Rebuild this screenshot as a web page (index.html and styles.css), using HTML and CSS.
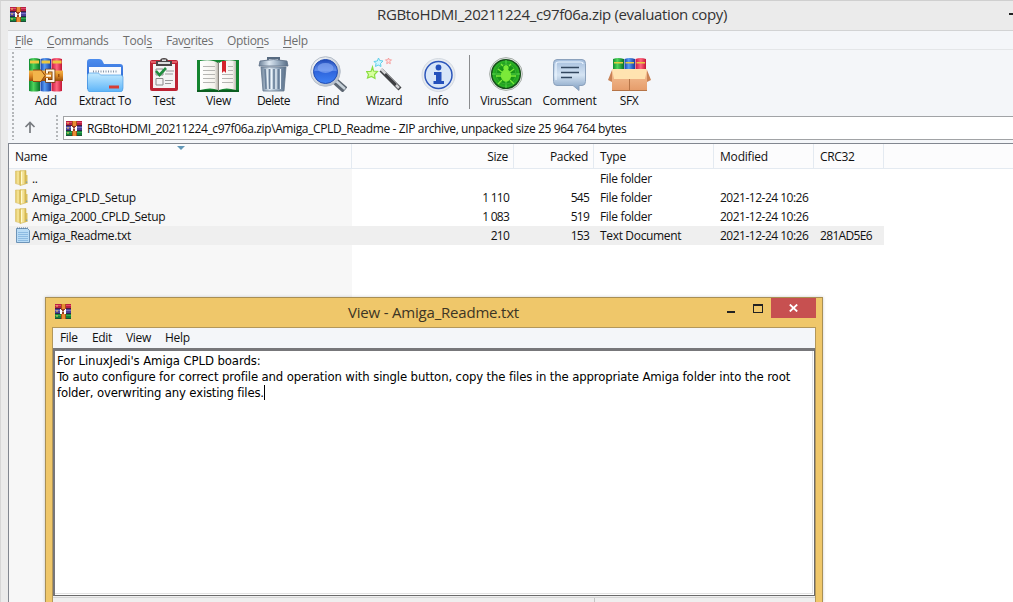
FILE: index.html
```html
<!DOCTYPE html>
<html lang="en">
<head>
<meta charset="utf-8">
<title>RGBtoHDMI_20211224_c97f06a.zip (evaluation copy)</title>
<link rel="stylesheet" href="styles.css">
</head>
<body>
<svg class="defs" width="0" height="0">
  <defs>
    <linearGradient id="g-green"><stop offset="0" stop-color="#118c30"/><stop offset=".4" stop-color="#4fd45c"/><stop offset="1" stop-color="#087027"/></linearGradient>
    <linearGradient id="g-blue"><stop offset="0" stop-color="#1846b0"/><stop offset=".4" stop-color="#579bf3"/><stop offset="1" stop-color="#153c9c"/></linearGradient>
    <linearGradient id="g-red"><stop offset="0" stop-color="#cb1841"/><stop offset=".5" stop-color="#ff6780"/><stop offset="1" stop-color="#c31535"/></linearGradient>
    <linearGradient id="g-belt" x2="0" y2="1"><stop offset="0" stop-color="#f5b64a"/><stop offset=".5" stop-color="#dc8923"/><stop offset="1" stop-color="#994d0c"/></linearGradient>
    <linearGradient id="g-folder" x2="0" y2="1"><stop offset="0" stop-color="#c4eaff"/><stop offset="1" stop-color="#5cb4f8"/></linearGradient>
    <linearGradient id="g-back" x2="0" y2="1"><stop offset="0" stop-color="#4d8dee"/><stop offset="1" stop-color="#2159c8"/></linearGradient>
    <linearGradient id="g-metal"><stop offset="0" stop-color="#6d8299"/><stop offset=".35" stop-color="#dde8f2"/><stop offset=".65" stop-color="#9eb1c5"/><stop offset="1" stop-color="#566c84"/></linearGradient>
    <linearGradient id="g-page"><stop offset="0" stop-color="#fff"/><stop offset=".8" stop-color="#f4f2ec"/><stop offset="1" stop-color="#bcb8b0"/></linearGradient>
    <linearGradient id="g-lens" x2="0" y2="1"><stop offset="0" stop-color="#1d48b8"/><stop offset=".45" stop-color="#6290ee"/><stop offset=".5" stop-color="#2f65dc"/><stop offset="1" stop-color="#3f82f5"/></linearGradient>
    <linearGradient id="g-ring" x2="1" y2="1"><stop offset="0" stop-color="#fafcff"/><stop offset="1" stop-color="#a9b3c0"/></linearGradient>
    <linearGradient id="g-talk" x2="0" y2="1"><stop offset="0" stop-color="#a3bddc"/><stop offset=".5" stop-color="#d5e4f3"/><stop offset="1" stop-color="#7e9dc1"/></linearGradient>
    <linearGradient id="g-box" x2="0" y2="1"><stop offset="0" stop-color="#f5c297"/><stop offset="1" stop-color="#e59b69"/></linearGradient>
    <radialGradient id="g-virus"><stop offset="0" stop-color="#0b7d0e"/><stop offset=".65" stop-color="#1a9b19"/><stop offset="1" stop-color="#32bb2b"/></radialGradient>
    <linearGradient id="g-dir"><stop offset="0" stop-color="#ddc15a"/><stop offset=".5" stop-color="#f9e99f"/><stop offset="1" stop-color="#d2b144"/></linearGradient>
    <symbol id="archive" viewBox="0 0 16 15">
      <path fill="#b91f43" d="M0 0h16v5H0z"/><path fill="#4a4298" d="M0 5h16v5H0z"/><path fill="#148239" d="M0 10h16v5H0z"/>
      <path fill="#e1486a" d="M0 1h16v1H0z"/><path fill="#7d70c5" d="M0 6h16v1H0z"/><path fill="#35a954" d="M0 11h16v1H0z"/>
      <path fill="#251c39" d="M0 4.3h16V5H0zM0 9.3h16v.7H0zM0 14.4h16v.6H0z"/>
      <path fill="#a84f18" d="M6 0h5v15H6z"/><path fill="#e98c35" d="M7 0h3v15H7z"/>
      <path fill="#963d25" d="M5 5h6v5H5z"/><path fill="#fff" d="M5 5h1v4h1v1H5zM10 5h1v5H9V9h1zM6 6h1v1h2V6h1v3H9V7.500H7V9H6z"/>
      <path fill="#f0d45b" d="M1.500 1h1v2h-1zM1.500 6h1v2h-1zM1.500 11h1v2h-1z"/>
    </symbol>
    <symbol id="dir" viewBox="0 0 13 16">
      <path fill="url(#g-dir)" stroke="#d8c06a" stroke-width=".6" d="M.5 1h5.200v14L.5 13.600z"/><path fill="url(#g-dir)" stroke="#ceb352" stroke-width=".6" d="M5 .8 11 .5v13.300L5 15.600z"/>
      <path fill="#d9bf5c" d="M11 5h1.500v9H11z"/><path fill="#fffbd0" d="M6 1.500h1.100v12.700L6 14.600z"/><path fill="#6196c6" d="M11.300 11.500h.9v1.500h-.9z"/>
    </symbol>
  </defs>
</svg>

<div class="window">
  <header class="titlebar">
    <svg class="app-icon"><use href="#archive"/></svg>
    <h1 class="title">RGBtoHDMI_20211224_c97f06a.zip (evaluation copy)</h1>
    <span class="minimize"></span>
  </header>

  <main class="client">
    <nav class="menu">
      <span class="m-file"><u>F</u>ile</span><span class="m-commands"><u>C</u>ommands</span><span class="m-tools">Tool<u>s</u></span><span class="m-fav">Fav<u>o</u>rites</span><span class="m-options">Optio<u>n</u>s</span><span class="m-help"><u>H</u>elp</span>
    </nav>

    <div class="toolbar">
      <div class="tool w-add">
        <svg width="34" height="34" viewBox="0 0 34 34"><path fill="url(#g-green)" d="M0 1q5-2 11 0v32q-6 1-11 0z"/><path fill="url(#g-blue)" d="M11.500 1q5-2 10.500 0v32q-5 1-10.500 0z"/><path fill="url(#g-red)" d="M22.500 1q5-2 10.500 0v32q-5 1-10.500 0z"/><path fill="#edc740" d="M1 2.500h9v3H1zM12.500 2.500H21v3h-8.500zM23.500 2.500h9v3h-9z"/><path fill="url(#g-belt)" d="M0 12.500h34V23H0z"/><path fill="#f2b54b" d="M4 12h8l4 5.500-4 6H4z"/><path fill="none" stroke="#8d4611" d="M4 12h8l4 5.500-4 6H4"/><path fill="none" stroke="#7a3c0b" stroke-width="3.600" d="M18 15.500v-3h6.500v10.500H18v-3"/><path fill="none" stroke="#fff5e3" stroke-width="2" d="M18 15.500v-3h6.500v10.500H18v-3M17 17.700h5"/><path fill="#9d5310" d="M29 16h1.500v3H29z"/></svg>
        <span>Add</span>
      </div>
      <div class="tool w-extract">
        <svg width="37" height="34" viewBox="0 0 37 34"><path fill="url(#g-back)" d="M0 4q0-3 3-3h9q3 0 4 3l1 2h16q3 0 3 3v22H0z"/><path fill="#f9fbfe" d="M2 9h32v14H2z"/><path stroke="#8795a8" stroke-width="2" stroke-dasharray="1 1.500" d="M6 13.500h25"/><path fill="url(#g-folder)" stroke="#4e9de5" stroke-width=".7" d="M.5 18q0-3 2-3h9l2 2h20q2.500 0 2.500 2v11q0 4-3 4H3.500q-3 0-3-4z"/><path fill="#d63d35" d="M22 27.500h10v3H22z"/></svg>
        <span>Extract To</span>
      </div>
      <div class="tool w-test">
        <svg width="28" height="34" viewBox="0 0 28 34"><rect y="2" width="28" height="31" rx="2" fill="#bd2434"/><rect x="1" y="3" width="26" height="2" fill="#e35a65"/><path fill="#f4f4f4" d="M3 6h22v24H3z"/><path fill="#4b4546" d="M6 3h4q0-3 4-3t4 3h4v5H6z"/><path fill="#ddd" d="M8 4h12v2H8zM12 1.500h4V3h-4z"/><path fill="none" stroke="#8a8a8a" d="M6 11h7v6H6zM6 20.500h7v6.500H6z"/><path stroke="#999" d="M16 13h8M15 16h8M15 22.500h8M15 25.500h6"/><path fill="none" stroke="#218d3e" stroke-width="2.600" d="m6 13 3.500 4 6.500-7"/></svg>
        <span>Test</span>
      </div>
      <div class="tool w-view">
        <svg width="43" height="33" viewBox="0 0 43 33"><path fill="#148530" d="M0 1h42v32H0z"/><path fill="#0b5e20" d="M0 31h42v2H0z"/><path fill="url(#g-page)" d="M3 2q12-2 18 2v27q-7-3-18 0z"/><path fill="url(#g-page)" d="M39 2q-11-2-17 2v27q7-3 17 0z"/><path stroke="#b5b5b2" d="M6 7.500h12M6 11.500h12M6 15.500h12M6 19.500h12M6 23.500h12M25 15.500h11M25 19.500h11M25 23.500h11M31 7.500h5M31 11.500h5"/><path stroke="#85827b" d="M21.500 3v29"/><path fill="#d5232b" d="M25 2h4v12l-2-2-2 2z"/></svg>
        <span>View</span>
      </div>
      <div class="tool w-delete">
        <svg width="31" height="35" viewBox="0 0 31 35"><path fill="none" stroke="#576a80" stroke-width="2" d="M10 4V1h11v3"/><path fill="url(#g-metal)" stroke="#5e7086" stroke-width=".8" d="M2 4q14-3 27 0l1 5H1z"/><path fill="url(#g-metal)" stroke="#62768d" stroke-width=".8" d="M3 10h25l-2 24H5z"/><path stroke="#6a809a" stroke-width="1.600" d="m7 12 1 20M11.500 12v20M16 12v20M20.500 12v20M25 12l-1 20"/><path stroke="#edf5fb" d="m9 12 1 20M13.500 12v20M18 12v20M22.500 12v20"/></svg>
        <span>Delete</span>
      </div>
      <div class="tool w-find">
        <svg width="37" height="36" viewBox="0 0 37 36"><path stroke="#5c6672" stroke-width="7" d="m25 25 10 9"/><path stroke="#c8d2da" stroke-width="2.500" d="m25 24 10 9"/><circle cx="15.500" cy="15.500" r="14.800" fill="url(#g-ring)" stroke="#b3bcc8"/><circle cx="15.500" cy="15.500" r="12" fill="url(#g-lens)" stroke="#214cb2"/><ellipse cx="15.500" cy="12" rx="8" ry="5" fill="#83a7f2" opacity=".7"/></svg>
        <span>Find</span>
      </div>
      <div class="tool w-wizard">
        <svg width="36" height="35" viewBox="0 0 36 35"><path stroke="#3f4043" stroke-width="4.200" d="m15 13 19 19"/><path stroke="#d4d4d6" stroke-width="2.500" d="m15 12 4.500 4.500M30 28l3 3"/><path stroke="#85868a" d="m20 16 12 12"/><path fill="#d8ff9e" stroke="#8ade42" stroke-width="1.200" d="m6.500 10 1 4 4 .5-3 3 .5 4-3.500-2-4 1.500L2.500 17.500l-2-3H5z"/><path fill="#d1f6ff" stroke="#5fcfe9" d="m12.500 1 1.200 2.500 3.300.5-2.500 2.500.5 3-2.800-1.500L9.500 9.500 10 6.500 8 4.500l3.300-.5z"/><path fill="#ffe3e1" stroke="#f58f8f" stroke-width=".8" d="m22.500 1 .8 1.800h2.200l-1.600 1.700.4 2.200-1.800-1-1.800 1 .4-2.200-1.600-1.700h2.200z"/></svg>
        <span>Wizard</span>
      </div>
      <div class="tool w-info">
        <svg width="35" height="34" viewBox="0 0 35 34"><circle cx="17.500" cy="17" r="16.500" fill="#e7ebf0" stroke="#d3d9e1"/><circle cx="17.500" cy="17" r="13.500" fill="#d8e6f8" stroke="#2c56bb" stroke-width="1.500"/><circle cx="17.500" cy="9.500" r="2.900" fill="#2451bc"/><path fill="#2451bc" d="M13 14h7.500v9H23v3H12.500v-3h2.500v-6H13z"/></svg>
        <span>Info</span>
      </div>
      <div class="separator"></div>
      <div class="tool w-virus">
        <svg width="34" height="34" viewBox="0 0 34 34"><circle cx="17" cy="17" r="16.400" fill="#e6e8e7" stroke="#a6ada8"/><circle cx="17" cy="17" r="14.300" fill="url(#g-virus)" stroke="#15501a" stroke-width="1.500"/><path stroke="#59d94b" d="M17 3v28M3 17h28"/><circle cx="17" cy="17" r="10" fill="none" stroke="#39aa33"/><g fill="#7bea39" stroke="#7bea39" stroke-width="1.300"><ellipse cx="17" cy="18.500" rx="4.500" ry="5.500"/><circle cx="17" cy="11" r="2"/><path fill="none" d="m14 9-2-2m8 2 2-2m-9 8-4-3m12 3 4-3m-13 7H7m15 0h5m-14 4-4 4m12-4 4 4"/></g></svg>
        <span>VirusScan</span>
      </div>
      <div class="tool w-comment">
        <svg width="33" height="34" viewBox="0 0 33 34"><path fill="url(#g-talk)" stroke="#8ca2bd" d="M4 1.500h25q3.500 0 3.500 4v18q0 4-3.500 4h-3v5l-6-5H4q-3.500 0-3.500-4v-18q0-4 3.500-4z"/><path fill="none" stroke="#ecf5ff" stroke-width="1.200" d="M3 22V6q0-2 3-2h21q3 0 3 2"/><path stroke="#33475f" stroke-width="1.500" d="M8 9.500h18M8 14.500h18M8 19.500h11"/></svg>
        <span>Comment</span>
      </div>
      <div class="tool w-sfx">
        <svg width="43" height="34" viewBox="0 0 43 34"><path fill="url(#g-green)" d="M5 1q5-2 11 0v12H5z"/><path fill="url(#g-blue)" d="M16.500 1q5-2 10.500 0v12H16.500z"/><path fill="url(#g-red)" d="M27.500 1q5-2 10.500 0v12H27.500z"/><path fill="#e8cb41" d="M6 4h9v1.500H6zM17.500 4H26v1.500h-8.500zM28.500 4H37v1.500h-8.500z"/><path fill="url(#g-box)" d="M4 12h35v21H4z"/><path fill="#c98355" d="m4 12-4 10 4 2zM39 12l4 10-4 2z"/><path fill="#ffe3b0" d="M4 11h35l-2 10H6z"/><path stroke="#b57447" d="M21.500 21v12M4 32.500h35"/></svg>
        <span>SFX</span>
      </div>
    </div>

    <div class="address-row">
      <svg class="up" width="12" height="13" viewBox="0 0 12 13"><path fill="none" stroke="#777b80" stroke-width="1.700" d="M6 12V2M1.500 6 6 1.500 10.500 6"/></svg>
      <div class="grip"></div>
      <div class="address"><svg class="app-icon"><use href="#archive"/></svg><span>RGBtoHDMI_20211224_c97f06a.zip\Amiga_CPLD_Readme - ZIP archive, unpacked size 25 964 764 bytes</span></div>
    </div>

    <section class="list">
      <div class="row head"><span class="name">Name</span><span class="num">Size</span><span class="num">Packed</span><span class="type">Type</span><span class="mod">Modified</span><span class="crc">CRC32</span><i class="sort"></i></div>
      <div class="row"><span class="name"><svg class="dir"><use href="#dir"/></svg>..</span><span></span><span></span><span>File folder</span><span></span><span></span></div>
      <div class="row"><span class="name loose"><svg class="dir"><use href="#dir"/></svg>Amiga_CPLD_Setup</span><span class="num">1 110</span><span class="num">545</span><span>File folder</span><span class="date">2021-12-24 10:26</span><span></span></div>
      <div class="row"><span class="name"><svg class="dir"><use href="#dir"/></svg>Amiga_2000_CPLD_Setup</span><span class="num">1 083</span><span class="num">519</span><span>File folder</span><span class="date">2021-12-24 10:26</span><span></span></div>
      <div class="row selected"><span class="name"><svg class="doc" width="14" height="16" viewBox="0 0 14 16"><path fill="#b9dcf6" stroke="#6d94b8" d="M.5 1.500h11l2 2v12H.5z"/><path stroke="#8dbbe2" d="M2 5.500h10M2 7.500h10M2 9.500h10M2 11.500h10M2 13.500h10"/><path stroke="#5d7b97" stroke-dasharray="1 1" d="M1 1h11"/></svg>Amiga_Readme.txt</span><span class="num">210</span><span class="num">153</span><span>Text Document</span><span class="date">2021-12-24 10:26</span><span class="hash">281AD5E6</span></div>
    </section>
  </main>
</div>

<section class="viewer">
  <header class="viewer-bar">
    <svg class="app-icon"><use href="#archive"/></svg>
    <h2 class="viewer-title">View - Amiga_Readme.txt</h2>
    <span class="v-min"></span><span class="v-max"></span>
    <span class="v-close"><svg width="9" height="8" viewBox="0 0 9 8"><path stroke="#fff" stroke-width="1.800" d="m.8.500 7.400 7M8.200.500.800 7.500"/></svg></span>
  </header>
  <div class="viewer-body">
    <nav class="viewer-menu"><span>File</span><span>Edit</span><span>View</span><span>Help</span></nav>
    <div class="text">
      <p class="l1">For LinuxJedi's Amiga CPLD boards:</p>
      <p class="l2">To auto configure for correct profile and operation with single button, copy the files in the appropriate Amiga folder into the root</p>
      <p class="l3">folder, overwriting any existing files.<i class="caret"></i></p>
    </div>
    <footer class="status"><span></span></footer>
  </div>
</section>
</body>
</html>
```
FILE: styles.css
```css
* { box-sizing: border-box; }
html, body { margin: 0; height: 100%; overflow: hidden; }
body { font: 12px/19px "Open Sans", "Noto Sans", sans-serif; letter-spacing: -.33px; color: #111; white-space: nowrap; position: relative; }
svg { display: block; flex: none; }
h1, h2, p { margin: 0; font-weight: 400; }
.defs { position: absolute; }
.app-icon { width: 16px; height: 15px; }

.window { height: 602px; background: #ebebeb; border-top: 1px solid #cfcfcf; border-left: 1px solid #d6d6d6; padding-left: 7px; }
.titlebar { height: 29px; display: flex; align-items: flex-start; padding-left: 2px; }
.titlebar .app-icon { margin-top: 6px; }
.title { margin-left: 351px; font-size: 15px; line-height: 27px; letter-spacing: -.35px; color: #333; flex: 1; }
.minimize { width: 4px; height: 2px; background: #222; margin-top: 12px; }
.client { border-top: 1px solid #d2d3d4; height: 572px; background: #f4f6f9; }
.menu { height: 19px; display: flex; color: #6d6d6d; padding-left: 7px; border-bottom: 1px solid #e4e6e8; }
.menu span { flex: none; }
.menu u { text-underline-offset: 2px; text-decoration-thickness: 1px; }
.m-file { width: 32px; }
.m-commands { width: 76px; }
.m-tools { width: 43px; letter-spacing: -.16px; }
.m-fav { width: 61px; letter-spacing: -.42px; }
.m-options { width: 56px; }

.toolbar { height: 65px; display: flex; padding: 5px 0 0 12px; background: repeating-linear-gradient(#b4b7ba 0 2px, #f4f6f9 2px 4px) 4px 2px / 2px 63px no-repeat; }
.tool { flex: none; display: flex; flex-direction: column; align-items: center; justify-content: space-between; height: 54px; }
.tool svg { margin-top: 3px; }
.tool span { line-height: 17px; height: 17px; }
.w-add { width: 52px; }
.w-add span { letter-spacing: -.1px; }
.w-extract { width: 66px; }
.w-test { width: 52px; }
.w-view { width: 57px; margin-right: -1px; }
.w-view svg { margin-top: 4px; }
.w-delete { width: 55px; letter-spacing: -.5px; }
.w-delete svg { margin-top: 2px; }
.w-find { width: 54px; }
.w-find svg { margin-top: 1px; }
.w-wizard { width: 58px; letter-spacing: -.42px; }
.w-wizard svg { margin-top: 2px; }
.w-info { width: 50px; }
.w-virus { width: 66px; margin-left: 3px; }
.w-virus svg { margin-top: 2px; }
.w-comment { width: 61px; letter-spacing: -.2px; }
.w-sfx { width: 58px; }
.separator { width: 1px; height: 54px; background: #8a8c8f; margin: 0 0 0 6px; }

.address-row { height: 28px; display: flex; align-items: flex-start; padding-left: 16px; background: repeating-linear-gradient(#b4b7ba 0 2px, #f4f6f9 2px 4px) 4px 0 / 2px 25px no-repeat; }
.up { margin-top: 6px; }
.grip { width: 2px; height: 25px; margin-left: 20px; background: repeating-linear-gradient(#b4b7ba 0 2px, #f4f6f9 2px 4px); }
.address { height: 24px; flex: 1; margin: 1px 0 0 5px; background: #fff; border: 1px solid #a1a3a6; border-right: 0; display: flex; align-items: center; padding-left: 2px; }
.address span { margin-left: 5px; letter-spacing: -.38px; line-height: 22px; padding-top: 1px; }

.list { height: 459px; border-top: 1px solid #828790; border-left: 1px solid #828790; background: linear-gradient(#f7f7f7, #f7f7f7) 0 0 / 343px 100% no-repeat #fff; }
.row { position: relative; display: grid; grid-template-columns: 343px 162px 80px 120px 100px 70px; width: 875px; height: 19px; line-height: 20px; }
.row > span { padding-left: 6px; }
.row > .num { text-align: right; padding: 0 5px 0 0; }
.row > .name { display: flex; }
.row > .loose { letter-spacing: -.22px; }
.row:not(.head) .num { letter-spacing: -.78px; }
.row .date { letter-spacing: -.5px; }
.row .hash { letter-spacing: -.66px; }
.row.head { width: auto; height: 25px; line-height: 25px; background: #fcfcfd; border-bottom: 1px solid #e4eaf1; }
.head > span { border-right: 1px solid #e4eaf1; }
.head .type { letter-spacing: -.18px; }
.head .mod { letter-spacing: -.19px; }
.sort { position: absolute; left: 168px; top: 2px; border: 4px solid transparent; border-top-color: #6297b7; border-bottom: 0; }
.dir { width: 13px; height: 16px; margin: 1px 4px 0 0; }
.doc { margin: 1px 2px 0 1px; }
.selected { background: #efefef; }

.viewer { position: absolute; left: 45px; top: 297px; width: 778px; height: 305px; background: #efc76a; border: 1px solid #a98f54; border-bottom: 0; padding: 0 6px; box-shadow: 0 0 3px #0003; }
.viewer-bar { height: 29px; display: flex; padding-left: 3px; }
.viewer-bar .app-icon { margin-top: 6px; }
.viewer-title { font-size: 15px; letter-spacing: -.2px; line-height: 28px; margin-left: 277px; color: #3d3524; flex: 1; }
.v-min { width: 8px; height: 2px; margin: 13px 18px 0 0; background: #222; }
.v-max { width: 10px; height: 9px; margin: 6px 8px 0 0; border: 1px solid #222; border-top-width: 2px; }
.v-close { width: 45px; height: 20px; background: #c75050; display: flex; align-items: center; justify-content: center; }
.viewer-body { height: 275px; background: #efefef; border: 1px solid #b3975a; border-width: 1px 1px 0; }
.viewer-menu { height: 20px; background: #f4f6f9; display: flex; padding-left: 7px; }
.viewer-menu span { width: 32px; }
.viewer-menu span:nth-child(2) { width: 34px; }
.viewer-menu span:nth-child(3) { width: 39px; }
.text { height: 248px; background: #fff; border: 1px solid #6a6a6a; border-width: 3px 1px 1px 2px; border-color: #77777a #6a6a6a #6a6a6a #77777a; box-shadow: inset -1px -1px #fff, inset -2px -2px #e3e3e3; padding: 2px 0 0 2px; font: 13px/16px "DejaVu Sans Condensed", "DejaVu Sans", sans-serif; color: #000; }
.l1 { letter-spacing: -.1px; }
.l2 { letter-spacing: -.13px; }
.l3 { letter-spacing: -.18px; display: flex; }
.caret { width: 1px; height: 15px; background: #000; }
.status { margin-top: 1px; height: 8px; border-top: 1px solid #d5d5d5; padding-left: 541px; }
.status span { display: block; width: 1px; height: 8px; background: #c5c5c5; }
```
